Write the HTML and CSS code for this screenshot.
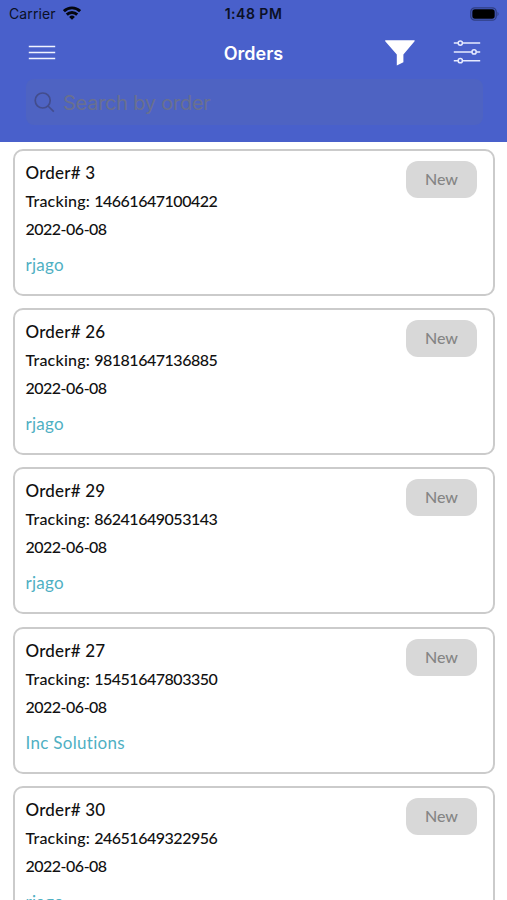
FILE: index.html
```html
<!DOCTYPE html>
<html lang="en">
<head>
<meta charset="utf-8">
<title>Orders</title>
<link rel="stylesheet" href="styles.css">
</head>
<body>
<header class="header">
  <div class="status">
    <div class="carrier"><span>Carrier</span>
      <svg width="18" height="14" viewBox="0 0 18 14" fill="none" stroke="#05070f" stroke-width="2.9"><path d="M.9 5.2a11.5 11.5 0 0 1 16.2 0M3.8 8.6a7.4 7.4 0 0 1 10.4 0"/><path d="M9 13.8L6.1 10.9a4.1 4.1 0 0 1 5.8 0z" fill="#05070f" stroke="none"/></svg>
    </div>
    <time class="time">1:48 PM</time>
    <svg class="battery" width="30" height="14" viewBox="0 0 30 14"><rect x=".8" y=".8" width="25.4" height="12.4" rx="4" fill="none" stroke="#2f3e83" stroke-width="1.3"/><rect x="2.3" y="2.3" width="22.4" height="9.4" rx="2.6" fill="#000"/><path d="M27.5 4.8q2.2 2.2 0 4.4z" fill="#2f3e83"/></svg>
  </div>
  <nav class="nav">
    <svg width="28" height="16" viewBox="0 0 28 16" stroke="#f0f3ff" stroke-width="1.7"><path d="M.8 1.5h26.4M.8 7.5h26.4M.8 13.5h26.4"/></svg>
    <h1 class="title">Orders</h1>
    <div class="tools">
      <svg width="30" height="26" viewBox="0 0 30 26" fill="#fff"><path d="M.2.2h29.4v1.1L18.4 14.4v7.8L11.8 25.4v-11L.2 1.3z"/></svg>
      <svg width="28" height="24" viewBox="0 0 28 24" fill="none" stroke="#e6eaff" stroke-width="1.5"><path d="M.8 3.1h4.3M9.5 3.1h17.7M.8 11.9h18.1M23.3 11.9h3.9M.8 20.7h4.3M9.5 20.7h17.7"/><circle cx="7.3" cy="3.1" r="2.1"/><circle cx="21.1" cy="11.9" r="2.1"/><circle cx="7.3" cy="20.7" r="2.1"/></svg>
    </div>
  </nav>
  <div class="search">
    <svg width="21" height="21" viewBox="0 0 21 21" fill="none" stroke="#434d8d" stroke-width="1.7"><circle cx="8.7" cy="8.5" r="7.5"/><path d="M14 14l5.8 5.7"/></svg>
    <span class="hint">Search by order</span>
  </div>
</header>
<main class="list">
  <article class="card"><div><h2 class="order">Order# 3</h2><p class="tracking">Tracking: <span>14661647100422</span></p><p class="date">2022-06-08</p><p class="client">rjago</p></div><span class="badge">New</span></article>
  <article class="card"><div><h2 class="order">Order# 26</h2><p class="tracking">Tracking: <span>98181647136885</span></p><p class="date">2022-06-08</p><p class="client">rjago</p></div><span class="badge">New</span></article>
  <article class="card"><div><h2 class="order">Order# 29</h2><p class="tracking">Tracking: <span>86241649053143</span></p><p class="date">2022-06-08</p><p class="client">rjago</p></div><span class="badge">New</span></article>
  <article class="card"><div><h2 class="order">Order# 27</h2><p class="tracking">Tracking: <span>15451647803350</span></p><p class="date">2022-06-08</p><p class="client">Inc Solutions</p></div><span class="badge">New</span></article>
  <article class="card"><div><h2 class="order">Order# 30</h2><p class="tracking">Tracking: <span>24651649322956</span></p><p class="date">2022-06-08</p><p class="client">rjago</p></div><span class="badge">New</span></article>
</main>
</body>
</html>
```
FILE: styles.css
```css
* { box-sizing: border-box; margin: 0; }
body { height: 900px; overflow: hidden; background: #fff; font-family: Lato, sans-serif; font-variant-ligatures: none; color: #111; }
svg { display: block; flex: none; }
.header { height: 142px; background: #4960cb; font-family: Inter, sans-serif; }
.status { height: 28px; padding: 0 7px 0 9px; display: grid; grid-template-columns: 1fr auto 1fr; align-items: center; color: #0b1025; }
.carrier { display: flex; align-items: center; gap: 7px; font-size: 14px; line-height: 28px; letter-spacing: .1px; }
.carrier svg { margin-top: -3px; }
.time { margin-right: 2px; font-size: 14px; font-weight: 600; line-height: 28px; letter-spacing: .5px; }
.battery { justify-self: end; margin-top: -1px; }
.nav { height: 50px; padding: 0 26px 0 28px; display: grid; grid-template-columns: 1fr auto 1fr; align-items: center; }
.title { margin-right: 2px; padding-top: 1px; font-size: 18px; font-weight: 600; line-height: 49px; color: #fff; letter-spacing: 0; }
.tools { display: flex; justify-content: flex-end; align-items: center; gap: 38px; }
.tools svg:last-child { margin-top: -2px; }
.search { height: 46px; margin: 1px 24px 0 26px; padding-left: 8px; border-radius: 8px; background: #4e63c2; display: flex; align-items: center; gap: 8px; }
.hint { padding-top: 2px; font-size: 20px; line-height: 44px; letter-spacing: -.25px; color: #69708f; }
.list { padding: 7px 12px 0 13px; display: flex; flex-direction: column; gap: 12.2px; }
.card { flex: none; height: 147px; padding: 8px 16px 0 10px; border: 2px solid #cbcbcb; border-radius: 10px; display: flex; justify-content: space-between; align-items: flex-start; }
.order { padding-left: .5px; font-size: 17px; font-weight: 500; line-height: 28px; letter-spacing: .2px; }
.tracking, .date { padding-left: .5px; font-size: 16px; font-weight: 500; line-height: 28px; letter-spacing: -.5px; }
.tracking { letter-spacing: .2px; }
.tracking span { letter-spacing: -.48px; }
.client { margin-top: 8px; font-size: 17px; line-height: 28px; letter-spacing: .3px; color: #4fb0c3; }
.client { padding-left: .5px; }
.badge { width: 71px; height: 37px; margin-top: 2px; border-radius: 12px; background: #d8d8d8; color: #858585; font-size: 16px; font-weight: 500; line-height: 35px; text-align: center; }
```
